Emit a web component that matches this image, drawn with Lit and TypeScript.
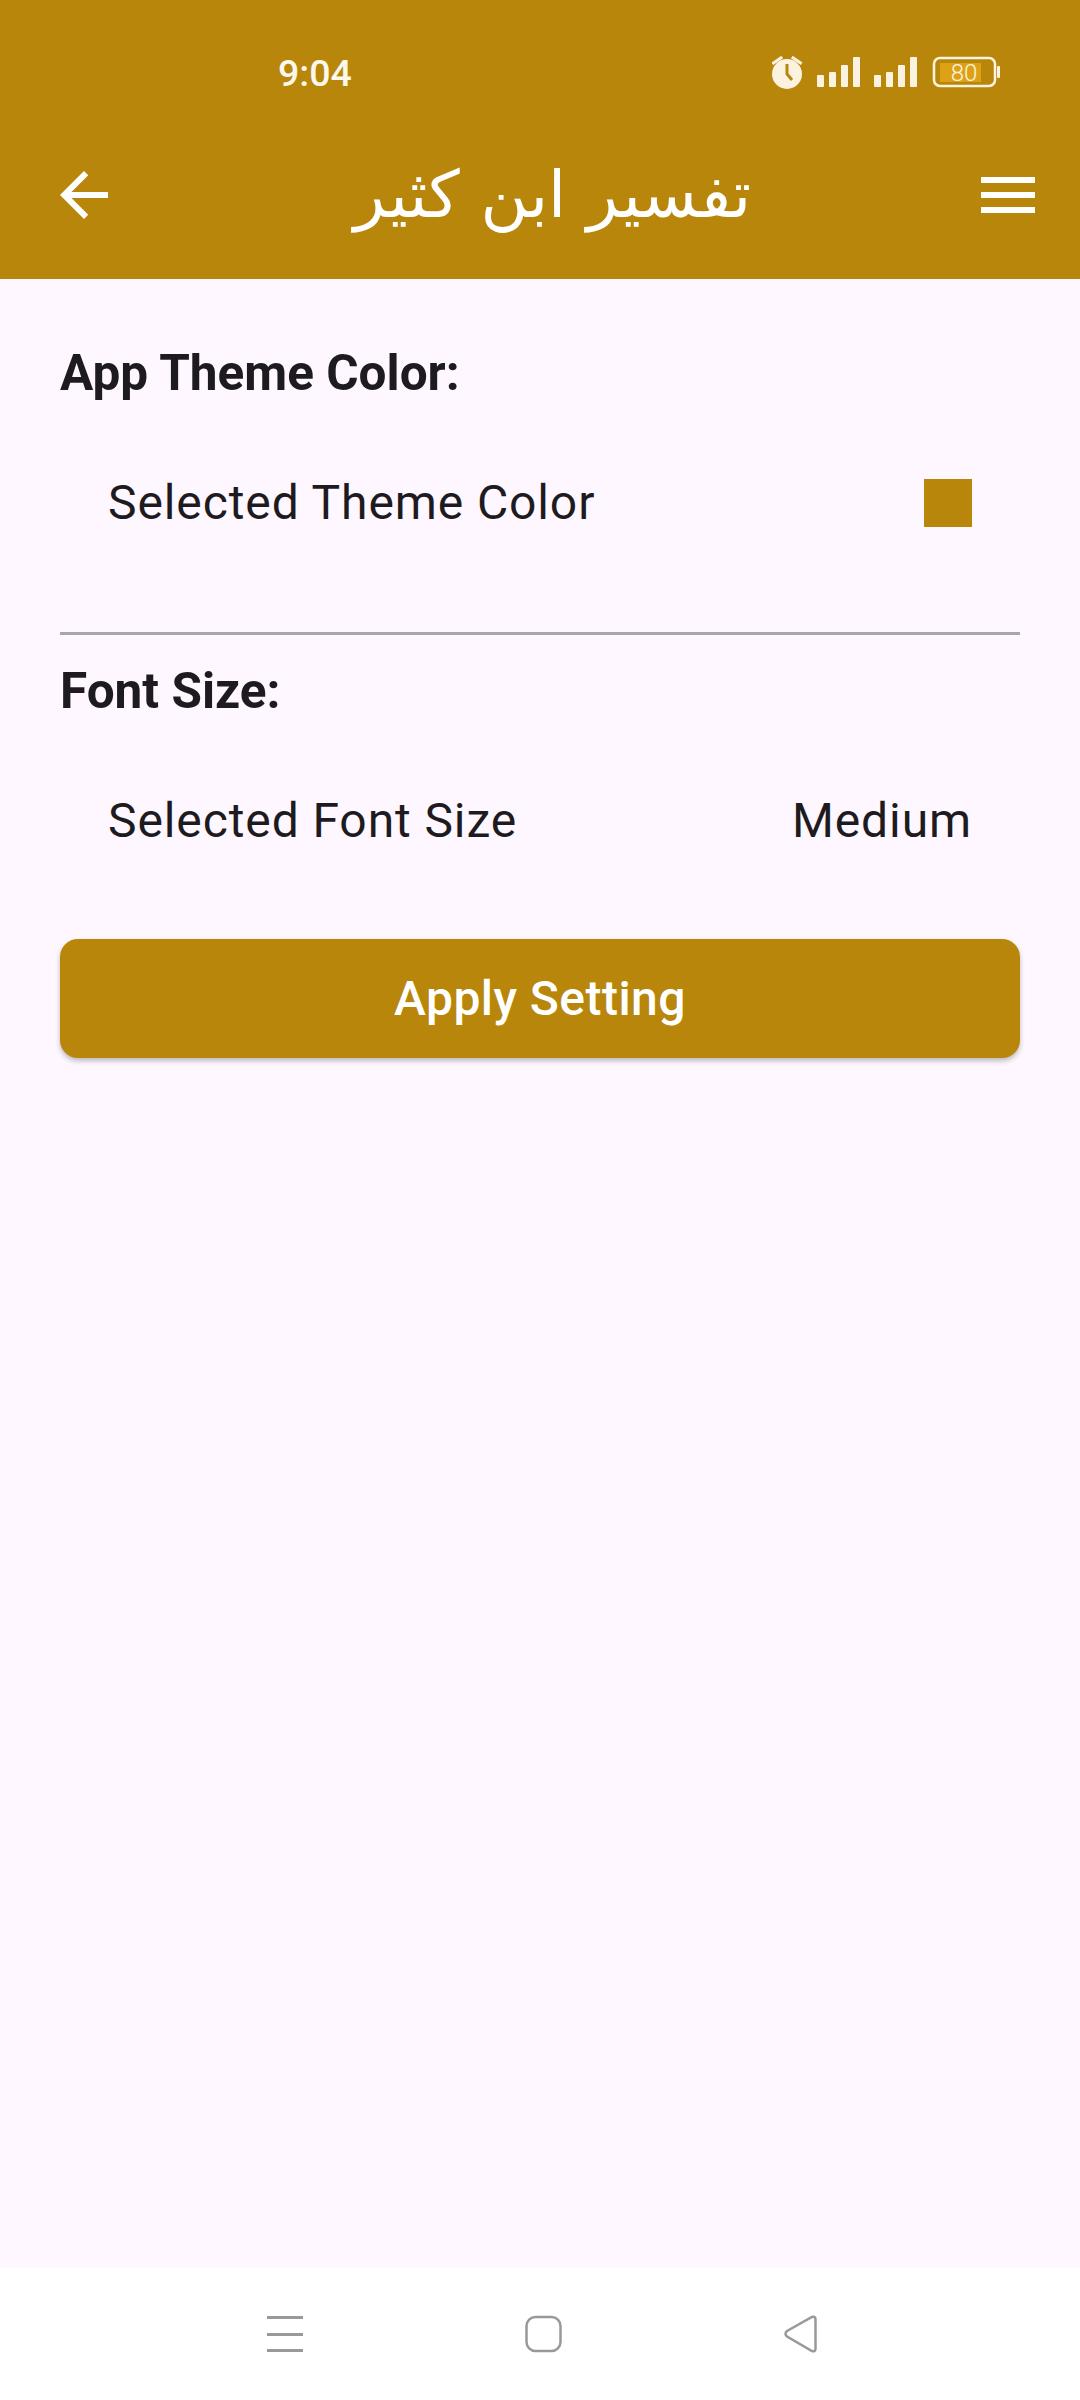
import { LitElement, css, html } from "lit";
import { customElement } from "lit/decorators.js";

@customElement("app-root")
export class AppRoot extends LitElement {
  static styles = css`
    :host {
      display: flex;
      flex-direction: column;
      height: 2400px;
      background: #fef7ff;
      font-family: Roboto, "Liberation Sans", sans-serif;
      color: #1d1b20;
    }
    .top {
      background: #b8860b;
      height: 279px;
      box-sizing: border-box;
      color: #fff;
    }
    .status {
      height: 144px;
      box-sizing: border-box;
      padding: 53px 0 0 278px;
      display: flex;
      align-items: flex-start;
    }
    .time {
      font-size: 37.5px;
      line-height: 40px;
      font-weight: 500;
      width: 494px;
      color: #fdf8ec;
    }
    .status-icons {
      display: block;
    }
    .appbar {
      display: flex;
      align-items: center;
      height: 102px;
      padding: 0 36px 0 48px;
    }
    .appbar svg {
      width: 72px;
      height: 72px;
      fill: #fff;
      flex: none;
    }
    .title {
      flex: 1;
      text-align: center;
      font-family: "DejaVu Sans", sans-serif;
      font-size: 65px;
      line-height: 72px;
      padding-left: 13px;
    }
    .body {
      flex: 1;
      padding: 0 60px;
      display: flex;
      flex-direction: column;
    }
    .heading {
      font-size: 49.5px;
      line-height: 56px;
      font-weight: 700;
    }
    .theme-heading {
      margin-top: 66px;
    }
    .row {
      display: flex;
      align-items: center;
      justify-content: space-between;
      padding: 0 48px;
      font-size: 48px;
      letter-spacing: 0.9px;
    }
    .first {
      margin-top: 73px;
    }
    .swatch {
      width: 48px;
      height: 48px;
      background: #b8860b;
    }
    .rule {
      height: 3px;
      background: #a9a5ad;
      margin: 101px 0 28px;
    }
    .size-row {
      margin-top: 73px;
      height: 56px;
    }
    .apply {
      margin-top: 91px;
      height: 119px;
      border: 0;
      border-radius: 18px;
      background: #b8860b;
      color: #fff;
      font: 500 48px Roboto, "Liberation Sans", sans-serif;
      letter-spacing: 0.45px;
      box-shadow: 0 3px 5px rgba(0, 0, 0, 0.25);
    }
    .nav {
      height: 132px;
      background: #fff;
      display: block;
    }
  `;

  render() {
    return html`
      <div class="top">
        <div class="status">
          <span class="time">9:04</span>
          <svg class="status-icons" width="240" height="40" viewBox="772 53 240 40">
            <g fill="#fbf3e0">
              <circle cx="787" cy="74" r="15" />
              <rect x="771" y="59" width="12" height="3" transform="rotate(-35 777 60)" />
              <rect x="791" y="59" width="12" height="3" transform="rotate(35 797 60)" />
              <rect x="817" y="75" width="7" height="12" rx="1" />
              <rect x="829" y="72" width="7" height="15" rx="1" />
              <rect x="841" y="65" width="7" height="22" rx="1" />
              <rect x="853" y="57" width="7" height="30" rx="1" />
              <rect x="874" y="75" width="7" height="12" rx="1" />
              <rect x="886" y="72" width="7" height="15" rx="1" />
              <rect x="898" y="65" width="7" height="22" rx="1" />
              <rect x="910" y="57" width="7" height="30" rx="1" />
              <rect x="997" y="66" width="3" height="12" rx="1" />
            </g>
            <path d="M787 64v10l5 6" fill="none" stroke="#b8860b" stroke-width="3" />
            <rect x="940" y="63" width="41" height="19" fill="#dca114" />
            <rect x="934" y="58" width="61" height="28" rx="6" fill="none" stroke="#fbf3e0" stroke-width="2.5" />
            <text x="964" y="81" text-anchor="middle" font-size="24" font-family="Roboto, sans-serif" font-weight="300" fill="#fbf3e0">80</text>
          </svg>
        </div>
        <div class="appbar">
          <svg viewBox="0 0 24 24"><path d="M20 11H7.83l5.59-5.59L12 4l-8 8 8 8 1.41-1.41L7.83 13H20v-2z" /></svg>
          <div class="title" dir="rtl">تفسیر ابن کثیر</div>
          <svg viewBox="0 0 24 24"><path d="M3 18h18v-2H3v2zm0-5h18v-2H3v2zm0-7v2h18V6H3z" /></svg>
        </div>
      </div>
      <div class="body">
        <div class="heading theme-heading">App Theme Color:</div>
        <div class="row first"><span>Selected Theme Color</span><span class="swatch"></span></div>
        <div class="rule"></div>
        <div class="heading">Font Size:</div>
        <div class="row size-row"><span>Selected Font Size</span><span>Medium</span></div>
        <button class="apply">Apply Setting</button>
      </div>
      <svg class="nav" width="1080" height="132" viewBox="0 2268 1080 132">
        <g fill="#999">
          <rect x="267" y="2316" width="36" height="3" />
          <rect x="267" y="2333" width="36" height="3" />
          <rect x="267" y="2349" width="36" height="3" />
        </g>
        <g fill="none" stroke="#999" stroke-width="2.5">
          <rect x="526.5" y="2317" width="34" height="34" rx="9" />
          <path d="M787 2331l25-14q3.500-1 3.500 2.500v29q0 3.500-3.500 2.500l-25-14.500q-3-3 0-5.500z" />
        </g>
      </svg>
    `;
  }
}
